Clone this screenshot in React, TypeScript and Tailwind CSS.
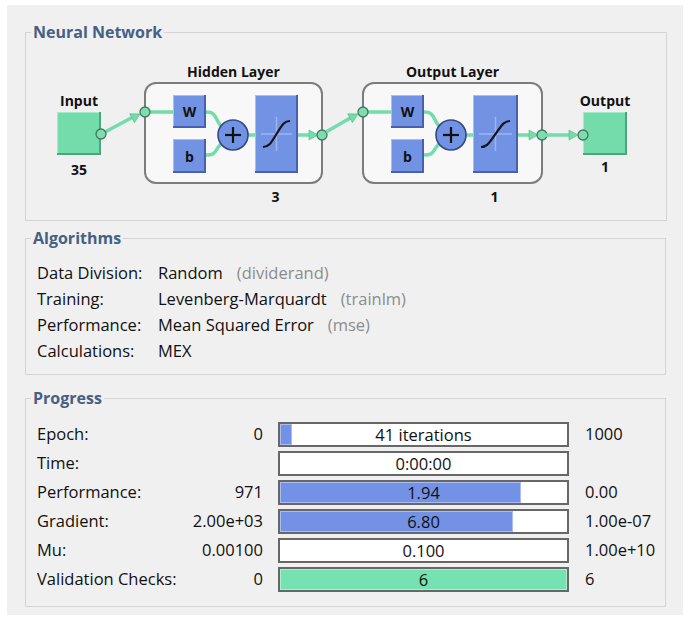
import React from "react";

const BLUE = "#7292e4";
const GREEN = "#74dcaa";

type BoxProps = { x: number; y: number; w: number; h: number; fill: string; light: string; dark: string };

const Bevel: React.FC<BoxProps> = ({ x, y, w, h, fill, light, dark }) => (
  <g>
    <rect x={x} y={y} width={w} height={h} fill={dark} />
    <rect x={x} y={y} width={w - 2} height={h - 2} fill={light} />
    <rect x={x + 1} y={y + 1} width={w - 3} height={h - 3} fill={fill} />
  </g>
);

const Node: React.FC<{ cx: number; cy: number }> = ({ cx, cy }) => (
  <circle cx={cx} cy={cy} r={5} fill="#7fdcb0" stroke="#3d7a5c" strokeWidth={1.3} />
);

const Arrow: React.FC<{ x: number; y: number; angle: number }> = ({ x, y, angle }) => (
  <polygon points="0,0 -9,-5 -9,5" fill="#74dcaa" stroke="#56b98a" strokeWidth={0.6} transform={`translate(${x} ${y}) rotate(${angle})`} />
);

const Layer: React.FC<{ x: number; w: number; title: string; size: string; tfW: number }> = ({ x, w, title, size, tfW }) => {
  const wx = x + 28;
  const px = x + 88;
  const tx = x + 110;
  return (
    <g>
      <text x={x + w / 2} y={77} textAnchor="middle" fontWeight="700" fontSize="14" fill="#111">
        {title}
      </text>
      <rect x={x} y={83} width={w} height={100} rx={11} fill="#f8f8f8" stroke="#7c7c7c" strokeWidth={2} />
      {/* wires */}
      <line x1={x} y1={112} x2={wx} y2={112} stroke={GREEN} strokeWidth={3.5} />
      <path d={`M${wx + 33} 112 C${wx + 44} 112 ${px - 19} 118 ${px - 12} 126`} fill="none" stroke={GREEN} strokeWidth={3.5} />
      <path d={`M${wx + 33} 155 C${wx + 44} 155 ${px - 19} 151 ${px - 12} 144`} fill="none" stroke={GREEN} strokeWidth={3.5} />
      <line x1={px + 15} y1={135} x2={tx} y2={135} stroke={GREEN} strokeWidth={3.5} />
      <line x1={tx + tfW} y1={135} x2={x + w - 8} y2={135} stroke={GREEN} strokeWidth={3.5} />
      <Arrow x={x + w - 4} y={135} angle={0} />
      {/* weight & bias */}
      <Bevel x={wx} y={95} w={33} h={33} fill={BLUE} light="#a9bdf3" dark="#4860ad" />
      <text x={wx + 16.5} y={117} textAnchor="middle" fontWeight="700" fontSize="14" fill="#111">
        W
      </text>
      <Bevel x={wx} y={139} w={33} h={34} fill={BLUE} light="#a9bdf3" dark="#4860ad" />
      <text x={wx + 16.5} y={162} textAnchor="middle" fontWeight="700" fontSize="14" fill="#111">
        b
      </text>
      {/* sum */}
      <circle cx={px} cy={135} r={15} fill={BLUE} stroke="#33497f" strokeWidth={1.6} />
      <line x1={px - 8} y1={135} x2={px + 8} y2={135} stroke="#111" strokeWidth={2.2} />
      <line x1={px} y1={127} x2={px} y2={143} stroke="#111" strokeWidth={2.2} />
      {/* transfer function */}
      <Bevel x={tx} y={95} w={tfW} h={78} fill={BLUE} light="#a9bdf3" dark="#4860ad" />
      <line x1={tx + 6} y1={134} x2={tx + tfW - 6} y2={134} stroke="#9fb4f0" strokeWidth={1.5} />
      <line x1={tx + tfW / 2} y1={117} x2={tx + tfW / 2} y2={151} stroke="#9fb4f0" strokeWidth={1.5} />
      <path
        d={`M${tx + 8} 147 C${tx + 14} 147 ${tx + 16} 143 ${tx + tfW / 2} 134 S${tx + tfW - 14} 121 ${tx + tfW - 8} 121`}
        fill="none"
        stroke="#151515"
        strokeWidth={2.2}
      />
      <Node cx={x} cy={112} />
      <Node cx={x + w} cy={135} />
      <text x={x + w / 2 + 42} y={202} textAnchor="middle" fontWeight="700" fontSize="14" fill="#111">
        {size}
      </text>
    </g>
  );
};

const Diagram: React.FC = () => (
  <svg width={640} height={178} viewBox="26 42 640 178" style={{ fontFamily: "'Open Sans', sans-serif" }}>
    {/* input */}
    <text x={79} y={106} textAnchor="middle" fontWeight="700" fontSize="14" fill="#111">
      Input
    </text>
    <Bevel x={57} y={112} w={44} h={43} fill={GREEN} light="#a4ecc9" dark="#4aa77b" />
    <text x={79} y={175} textAnchor="middle" fontWeight="700" fontSize="14" fill="#111">
      35
    </text>
    <line x1={105} y1={132} x2={133} y2={117} stroke={GREEN} strokeWidth={3.5} />
    <Arrow x={140} y={114} angle={-28} />
    <Layer x={145} w={177} title="Hidden Layer" size="3" tfW={43} />
    <line x1={326} y1={132} x2={352} y2={117} stroke={GREEN} strokeWidth={3.5} />
    <Arrow x={358} y={114} angle={-28} />
    <Layer x={363} w={179} title="Output Layer" size="1" tfW={45} />
    <line x1={546} y1={135} x2={572} y2={135} stroke={GREEN} strokeWidth={3.5} />
    <Arrow x={578} y={135} angle={0} />
    {/* output */}
    <text x={605} y={106} textAnchor="middle" fontWeight="700" fontSize="14" fill="#111">
      Output
    </text>
    <Bevel x={583} y={112} w={44} h={43} fill={GREEN} light="#a4ecc9" dark="#4aa77b" />
    <Node cx={583} cy={135} />
    <Node cx={101} cy={134} />
    <text x={605} y={172} textAnchor="middle" fontWeight="700" fontSize="14" fill="#111">
      1
    </text>
  </svg>
);

const algorithms = [
  { label: "Data Division:", value: "Random", note: "(dividerand)" },
  { label: "Training:", value: "Levenberg-Marquardt", note: "(trainlm)" },
  { label: "Performance:", value: "Mean Squared Error", note: "(mse)" },
  { label: "Calculations:", value: "MEX", note: "" },
];

const progress = [
  { label: "Epoch:", start: "0", text: "41 iterations", pct: 4.1, green: false, end: "1000" },
  { label: "Time:", start: "", text: "0:00:00", pct: 0, green: false, end: "" },
  { label: "Performance:", start: "971", text: "1.94", pct: 84, green: false, end: "0.00" },
  { label: "Gradient:", start: "2.00e+03", text: "6.80", pct: 81.3, green: false, end: "1.00e-07" },
  { label: "Mu:", start: "0.00100", text: "0.100", pct: 0, green: false, end: "1.00e+10" },
  { label: "Validation Checks:", start: "0", text: "6", pct: 100, green: true, end: "6" },
];

const Group: React.FC<{ title: string; className?: string; children: React.ReactNode }> = ({ title, className, children }) => (
  <fieldset className={`ml-[18px] w-[641px] border border-[#d4d4d4] ${className ?? ""}`}>
    <legend className="ml-[5px] px-[2px] text-[16px] leading-[20px] font-bold text-[#465f84]">{title}</legend>
    {children}
  </fieldset>
);

export default function App() {
  return (
    <div className="h-[623px] w-[689px] bg-white pt-[5px] font-['Open_Sans',sans-serif] text-[#111]">
      <div className="ml-[7px] w-[676px] bg-[#f0f0f0] pt-[17px] pb-[8px]">
        <Group title="Neural Network">
          <div className="flex h-[178px]">
            <Diagram />
          </div>
        </Group>

        <Group title="Algorithms" className="mt-[7px]">
          <div className="flex flex-col pt-[12px] pb-[10px] pl-[11px] text-[16.5px] leading-[26px]">
            {algorithms.map((a) => (
              <div key={a.label} className="flex">
                <span className="w-[121px]">{a.label}</span>
                <span>{a.value}</span>
                {a.note && <span className="ml-[14px] text-[#8c8c8c]">{a.note}</span>}
              </div>
            ))}
          </div>
        </Group>

        <Group title="Progress" className="mt-[13px]">
          <div className="flex flex-col gap-[4px] pt-[14px] pb-[14px] pl-[11px] text-[16.5px]">
            {progress.map((p) => (
              <div key={p.label} className="flex h-[25px] items-center">
                <div className="flex w-[226px] justify-between">
                  <span>{p.label}</span>
                  <span>{p.start}</span>
                </div>
                <div className="relative ml-[15px] flex h-[25px] w-[291px] items-center justify-center border-2 border-[#676767] bg-white">
                  {p.pct > 0 && (
                    <div
                      className={`absolute top-0 bottom-0 left-0 border border-white/40 ${p.green ? "bg-[#77e2b1]" : "bg-[#7391e5]"}`}
                      style={{ width: `${p.pct}%` }}
                    />
                  )}
                  <span className="relative leading-[20px]">{p.text}</span>
                </div>
                <span className="ml-[16px]">{p.end}</span>
              </div>
            ))}
          </div>
        </Group>
      </div>
    </div>
  );
}
